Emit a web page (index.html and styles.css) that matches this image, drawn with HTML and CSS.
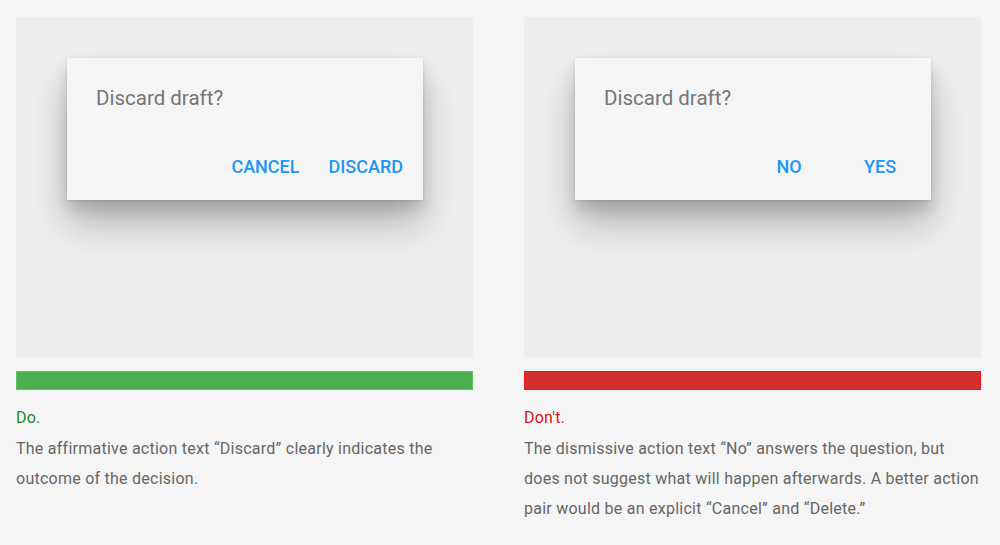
FILE: index.html
```html
<!DOCTYPE html>
<html>
<head>
<meta charset="utf-8">
<link rel="stylesheet" href="styles.css">
</head>
<body>
<div class="page">
  <section class="example">
    <div class="stage">
      <div class="dialog">
        <div class="title">Discard draft?</div>
        <div class="actions">
          <span class="btn">CANCEL</span>
          <span class="btn">DISCARD</span>
        </div>
      </div>
    </div>
    <div class="bar bar-do"></div>
    <div class="label label-do">Do.</div>
    <p class="desc">The affirmative action text “Discard” clearly indicates the outcome of the decision.</p>
  </section>
  <section class="example">
    <div class="stage">
      <div class="dialog">
        <div class="title">Discard draft?</div>
        <div class="actions">
          <span class="btn">NO</span>
          <span class="btn">YES</span>
        </div>
      </div>
    </div>
    <div class="bar bar-dont"></div>
    <div class="label label-dont">Don't.</div>
    <p class="desc">The dismissive action text “No” answers the question, but does not suggest what will happen afterwards. A better action pair would be an explicit “Cancel” and “Delete.”</p>
  </section>
</div>
</body>
</html>
```

FILE: styles.css
```css
html, body {
  margin: 0;
  padding: 0;
  background: #f5f5f5;
}
body {
  font-family: Roboto, "Liberation Sans", sans-serif;
}
.page {
  display: flex;
  gap: 51px;
  padding: 17px 19px 0 16px;
}
.example {
  width: 457px;
  flex: none;
}
.stage {
  background: #eeeeee;
  height: 341px;
  padding: 41px 0 0 51px;
  box-sizing: border-box;
}
.dialog {
  width: 356px;
  height: 142px;
  background: #f5f5f5;
  box-sizing: border-box;
  box-shadow: 0 24px 36px rgba(0,0,0,0.24), 0 10px 14px rgba(0,0,0,0.12), 0 1px 3px rgba(0,0,0,0.12);
  display: flex;
  flex-direction: column;
  justify-content: space-between;
  padding: 28px 12px 21px 29px;
}
.title {
  font-size: 20.5px;
  color: #757575;
  line-height: 24px;
}
.actions {
  display: flex;
  justify-content: flex-end;
  gap: 13px;
}
.btn {
  min-width: 78px;
  padding: 0 8px;
  box-sizing: border-box;
  text-align: center;
  font-size: 18px;
  font-weight: 500;
  color: #2196f3;
  line-height: 24px;
}
.bar {
  height: 19px;
  margin-top: 13px;
  box-sizing: border-box;
}
.bar-do {
  background: #4caf50;
  border: 1px solid #5bc45e;
}
.bar-dont {
  background: #d32f2f;
  border: 1px solid #e8181c;
}
.label {
  margin-top: 18px;
  font-size: 16px;
  line-height: 20px;
  letter-spacing: 0.2px;
}
.label-do { color: #1c8a1c; }
.label-dont { color: #dd1111; }
.desc {
  margin: 6px 0 0;
  font-size: 16px;
  line-height: 30px;
  letter-spacing: 0.25px;
  color: #666666;
}
```
